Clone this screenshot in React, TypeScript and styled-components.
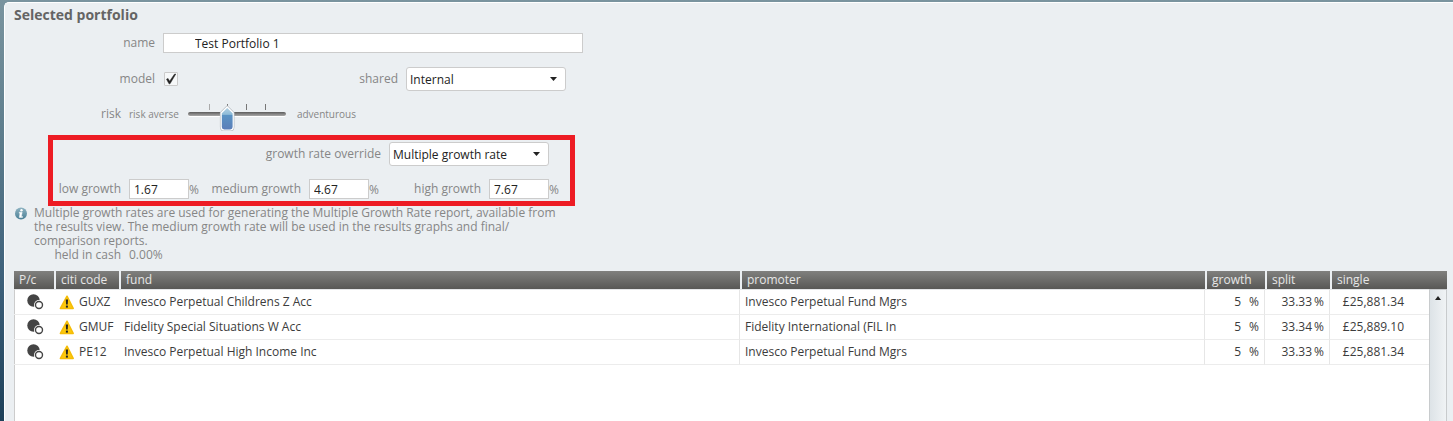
import React, { useState } from "react";
import styled, { createGlobalStyle } from "styled-components";

const GlobalStyle = createGlobalStyle`
  *, *::before, *::after { box-sizing: border-box; }
  html { background: #7a949f; }
  body { margin: 0; }
  body, input, select {
    font-family: "Open Sans", "Noto Sans", sans-serif;
    font-size: 12px;
  }
`;

const Frame = styled.div`
  display: flex;
  min-height: 100vh;
  padding: 2px 0 0 4px;
  background: linear-gradient(#7a949f 0%, #5b7b8b 35%, #3f627c 65%, #1d4059 100%);
`;

const Panel = styled.main`
  flex: 1;
  min-width: 0;
  display: flex;
  flex-direction: column;
  padding: 2px 6px 0 9px;
  border: solid #ffffff;
  border-width: 1px 0 0 1px;
  border-top-left-radius: 5px;
  background: #ebeff2;
  color: #868686;
`;

const Title = styled.h1`
  margin: 0 0 8px;
  font-size: 14px;
  line-height: 20px;
  font-weight: 700;
  color: #646464;
`;

const Row = styled.div<{ $top?: number }>`
  display: flex;
  align-items: center;
  margin-top: ${(p) => p.$top ?? 0}px;
`;

const Label = styled.label<{ $width: number }>`
  width: ${(p) => p.$width}px;
  padding-right: 8px;
  text-align: right;
  line-height: 16px;
  white-space: nowrap;
`;

const TextInput = styled.input<{ $width: number; $indent?: number }>`
  width: ${(p) => p.$width}px;
  height: 20px;
  padding: 0 4px 0 ${(p) => p.$indent ?? 4}px;
  border: 1px solid #cccccc;
  border-radius: 0;
  background: #ffffff;
  color: #222222;
  outline: none;
`;

const CheckWrap = styled.span`
  display: grid;
  width: 16px;
  place-items: center;
  > * { grid-area: 1 / 1; }
  svg { pointer-events: none; }
`;

const CheckInput = styled.input`
  appearance: none;
  width: 14px;
  height: 14px;
  margin: 0;
  border: 1px solid #cbcbcb;
  border-radius: 1px;
  background: #f6f8f9;
`;

const SelectWrap = styled.span`
  display: grid;
  width: 160px;
  align-items: center;
  > * { grid-area: 1 / 1; }
  svg {
    justify-self: end;
    margin-right: 9px;
    pointer-events: none;
  }
`;

const SelectBox = styled.select`
  appearance: none;
  width: 100%;
  height: 24px;
  padding: 0 20px 0 3px;
  border: 1px solid #cccccc;
  border-radius: 3px;
  background: #ffffff;
  color: #222222;
  outline: none;
`;

const Hint = styled.span`
  font-size: 10px;
  line-height: 14px;
`;

const SliderWrap = styled.span`
  display: grid;
  width: 100px;
  margin: 0 10px 0 8px;
  > * { grid-area: 1 / 1; }
`;

const RangeInput = styled.input`
  width: 100%;
  height: 34px;
  margin: 0;
  opacity: 0;
`;

const Highlight = styled.section`
  width: fit-content;
  margin: 4px 0 0 34px;
  padding: 2px 7px 2px 0;
  border: 5px solid #ed1c24;
`;

const Unit = styled.span`
  width: 14px;
`;

const Note = styled.div`
  display: flex;
  gap: 7px;
  svg { flex: none; margin-top: 1px; }
`;

const NoteText = styled.p`
  margin: 0;
  width: 530px;
  line-height: 14px;
`;

const Cash = styled.div`
  display: flex;
  line-height: 14px;
`;

const CashLabel = styled.span`
  width: 115px;
  padding-right: 8px;
  text-align: right;
`;

const Grid = styled.div`
  flex: 1;
  display: grid;
  grid-template-columns: minmax(0, 1fr);
  margin-top: 9px;
  > * { grid-area: 1 / 1; }
`;

const GridBody = styled.div`
  margin-top: 18px;
  border: 1px solid #cccccc;
  border-top-color: #e4e6e8;
  border-bottom: 0;
  background: #ffffff;
`;

const Table = styled.table`
  align-self: start;
  width: 100%;
  table-layout: fixed;
  border-collapse: separate;
  border-spacing: 0;
  color: #3c3c3c;
`;

const Col = styled.col<{ $width?: number }>`
  width: ${(p) => (p.$width ? `${p.$width}px` : "auto")};
`;

const HeadCell = styled.th`
  height: 18px;
  padding: 0 5px;
  border-left: 2px solid #ebeff2;
  background: linear-gradient(#80807e, #585856) padding-box;
  color: #e6e6e6;
  font-weight: 400;
  line-height: 18px;
  text-align: left;
  &:first-child { border-left: 0; }
`;

const BodyRow = styled.tr`
  &:first-child td { height: 26px; padding-top: 1px; }
`;

const Cell = styled.td<{ $line?: boolean; $align?: string; $right?: number }>`
  height: 25px;
  padding: 0 ${(p) => p.$right ?? 5}px 0 5px;
  border-bottom: 1px solid #ececec;
  border-right: ${(p) => (p.$line ? "1px solid #e6e6e6" : "0")};
  text-align: ${(p) => p.$align ?? "left"};
  line-height: 16px;
  white-space: nowrap;
`;

const Amount = styled.span<{ $gap: number }>`
  display: inline-flex;
  gap: ${(p) => p.$gap}px;
`;

const Code = styled.span`
  display: flex;
  align-items: center;
  gap: 5px;
`;

const PieIcon = styled.svg`
  display: block;
  margin-left: 8px;
`;

const ScrollBar = styled.div`
  justify-self: end;
  display: flex;
  flex-direction: column;
  width: 18px;
  margin-top: 18px;
  border: 1px solid #c8cbcd;
  border-bottom: 0;
  background: linear-gradient(90deg, #dde3e7, #f0f3f5);
`;

const ScrollButton = styled.button`
  display: grid;
  place-items: center;
  height: 16px;
  padding: 0;
  border: 0;
  background: none;
`;

function SelectField({ id, value }: { id: string; value: string }) {
  return (
    <SelectWrap>
      <SelectBox id={id} defaultValue={value}>
        <option>{value}</option>
      </SelectBox>
      <svg width="7" height="4" viewBox="0 0 7 4" aria-hidden="true">
        <path d="M0 0H7L3.5 4Z" fill="#222" />
      </svg>
    </SelectWrap>
  );
}

function RiskSlider() {
  const [value, setValue] = useState(40);
  const x = 1 + value * 0.98;
  return (
    <SliderWrap>
      <svg width="100" height="34" viewBox="0 0 100 34" aria-hidden="true">
        <defs>
          <linearGradient id="thumb" x1="0" y1="0" x2="0" y2="1">
            <stop offset="0" stopColor="#b5d3e5" />
            <stop offset="0.32" stopColor="#8fbcd8" />
            <stop offset="0.36" stopColor="#5a93c4" />
            <stop offset="1" stopColor="#5b7db8" />
          </linearGradient>
          <linearGradient id="track" x1="0" y1="0" x2="0" y2="1">
            <stop offset="0" stopColor="#5c5c5c" />
            <stop offset="1" stopColor="#a9a9a9" />
          </linearGradient>
        </defs>
        {[22, 40, 59, 78].map((t, i) => (
          <rect key={t} x={t} y="7" width="1" height="6" fill={i ? "#777" : "#aaa"} />
        ))}
        <rect x="1" y="15" width="98" height="5" rx="2" fill="#fff" />
        <rect x="1" y="15" width="98" height="4" rx="2" fill="url(#track)" />
        <g transform={`translate(${x} 0)`}>
          <path d="M0 10L6 16V30Q6 33 3 33H-3Q-6 33 -6 30V16Z" fill="none" stroke="#b9bfc5" strokeWidth="2.6" strokeLinejoin="round" />
          <path d="M0 10L6 16V30Q6 33 3 33H-3Q-6 33 -6 30V16Z" fill="url(#thumb)" stroke="#fff" strokeWidth="1.2" strokeLinejoin="round" />
        </g>
      </svg>
      <RangeInput
        id="risk"
        type="range"
        min="0"
        max="100"
        value={value}
        onChange={(e) => setValue(Number(e.target.value))}
      />
    </SliderWrap>
  );
}

function GrowthField({ id, label, value, width }: { id: string; label: string; value: string; width: number }) {
  return (
    <>
      <Label htmlFor={id} $width={width}>{label}</Label>
      <TextInput id={id} defaultValue={value} $width={60} />
      <Unit>%</Unit>
    </>
  );
}

const InfoIcon = () => (
  <svg width="13" height="13" viewBox="0 0 13 13" aria-hidden="true">
    <defs>
      <linearGradient id="info" x1="0" y1="0" x2="0" y2="1">
        <stop offset="0" stopColor="#8fb4c2" />
        <stop offset="1" stopColor="#4a7f96" />
      </linearGradient>
    </defs>
    <circle cx="7" cy="6.5" r="6" fill="url(#info)" />
    <circle cx="7.5" cy="3.2" r="1.2" fill="#fff" />
    <path d="M5.2 5.2H8.2L7.4 9.4H8.6V10.4H5.2L6 6.2H5.2Z" fill="#fff" stroke="#fff" strokeWidth="0.4" />
  </svg>
);

const WarningIcon = () => (
  <svg width="15" height="15" viewBox="0 0 15 15" aria-hidden="true">
    <path d="M8 1.2L14.2 13.4H1.4Z" fill="#fdc80c" stroke="#f5bd08" strokeWidth="1.5" strokeLinejoin="round" />
    <path d="M6.8 4.4H9L8.7 9.6H7.1Z" fill="#222" />
    <rect x="6.9" y="10.6" width="2" height="2" fill="#222" />
  </svg>
);

const funds = [
  { code: "GUXZ", fund: "Invesco Perpetual Childrens Z Acc", promoter: "Invesco Perpetual Fund Mgrs", split: "33.33", single: "£25,881.34" },
  { code: "GMUF", fund: "Fidelity Special Situations W Acc", promoter: "Fidelity International (FIL In", split: "33.34", single: "£25,889.10" },
  { code: "PE12", fund: "Invesco Perpetual High Income Inc", promoter: "Invesco Perpetual Fund Mgrs", split: "33.33", single: "£25,881.34" },
];

export default function App() {
  const [model, setModel] = useState(true);
  return (
    <>
      <GlobalStyle />
      <Frame>
        <Panel>
          <Title>Selected portfolio</Title>
          <Row>
            <Label htmlFor="name" $width={149}>name</Label>
            <TextInput id="name" defaultValue="Test Portfolio 1" $width={420} $indent={31} />
          </Row>
          <Row $top={14}>
            <Label htmlFor="model" $width={149}>model</Label>
            <CheckWrap>
              <CheckInput id="model" type="checkbox" checked={model} onChange={(e) => setModel(e.target.checked)} />
              {model && (
                <svg width="12" height="12" viewBox="0 0 12 12" aria-hidden="true">
                  <path d="M1.5 6.2L3 5.4L4.6 8.2L9.4 1.2L10.8 1L5 10.8H4Z" fill="#222" stroke="#222" strokeWidth="0.5" />
                </svg>
              )}
            </CheckWrap>
            <Label htmlFor="shared" $width={227}>shared</Label>
            <SelectField id="shared" value="Internal" />
          </Row>
          <Row $top={6}>
            <Label htmlFor="risk" $width={115}>risk</Label>
            <Hint>risk averse</Hint>
            <RiskSlider />
            <Hint>adventurous</Hint>
          </Row>
          <Highlight>
            <Row>
              <Label htmlFor="override" $width={336}>growth rate override</Label>
              <SelectField id="override" value="Multiple growth rate" />
            </Row>
            <Row $top={13}>
              <GrowthField id="low" label="low growth" value="1.67" width={76} />
              <GrowthField id="medium" label="medium growth" value="4.67" width={106} />
              <GrowthField id="high" label="high growth" value="7.67" width={106} />
            </Row>
          </Highlight>
          <Note>
            <InfoIcon />
            <NoteText>
              Multiple growth rates are used for generating the Multiple Growth Rate report, available from the
              results view. The medium growth rate will be used in the results graphs and final/<wbr />comparison
              reports.
            </NoteText>
          </Note>
          <Cash>
            <CashLabel>held in cash</CashLabel>
            <span>0.00%</span>
          </Cash>
          <Grid>
            <GridBody />
            <Table>
              <colgroup>
                <Col $width={40} />
                <Col $width={65} />
                <Col />
                <Col $width={465} />
                <Col $width={60} />
                <Col $width={65} />
                <Col $width={117} />
              </colgroup>
              <thead>
                <tr>
                  {["P/c", "citi code", "fund", "promoter", "growth", "split", "single"].map((h) => (
                    <HeadCell key={h} scope="col">{h}</HeadCell>
                  ))}
                </tr>
              </thead>
              <tbody>
                {funds.map((f) => (
                  <BodyRow key={f.code}>
                    <Cell>
                      <PieIcon width="17" height="16" viewBox="0 0 17 16" aria-hidden="true">
                        <circle cx="6.5" cy="6.5" r="6.2" fill="#444" />
                        <circle cx="12" cy="11" r="5" fill="#fff" />
                        <circle cx="12" cy="11" r="3.5" fill="#fff" stroke="#444" strokeWidth="1.4" />
                      </PieIcon>
                    </Cell>
                    <Cell>
                      <Code>
                        <WarningIcon />
                        {f.code}
                      </Code>
                    </Cell>
                    <Cell $line>{f.fund}</Cell>
                    <Cell $line>{f.promoter}</Cell>
                    <Cell $line $align="right">
                      <Amount $gap={8}><span>5</span><span>%</span></Amount>
                    </Cell>
                    <Cell $line $align="right">
                      <Amount $gap={2}><span>{f.split}</span><span>%</span></Amount>
                    </Cell>
                    <Cell $align="right" $right={43}>{f.single}</Cell>
                  </BodyRow>
                ))}
              </tbody>
            </Table>
            <ScrollBar>
              <ScrollButton type="button" aria-label="Scroll up">
                <svg width="6" height="4" viewBox="0 0 6 4" aria-hidden="true">
                  <path d="M3 0L6 4H0Z" fill="#222" />
                </svg>
              </ScrollButton>
            </ScrollBar>
          </Grid>
        </Panel>
      </Frame>
    </>
  );
}
